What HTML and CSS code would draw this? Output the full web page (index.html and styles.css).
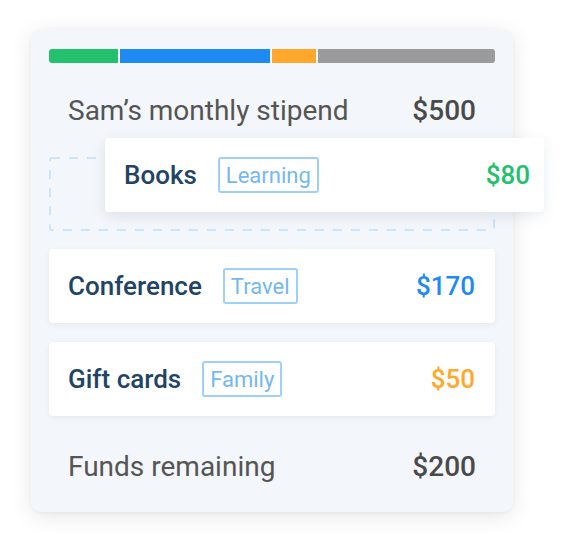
FILE: index.html
```html
<!DOCTYPE html>
<html>
<head>
<meta charset="utf-8">
<link rel="stylesheet" href="styles.css">
</head>
<body>
<div class="card">
  <div class="bar">
    <span class="seg seg-green"></span>
    <span class="seg seg-blue"></span>
    <span class="seg seg-orange"></span>
    <span class="seg seg-gray"></span>
  </div>
  <div class="row summary">
    <span class="label">Sam’s monthly stipend</span>
    <span class="amount">$500</span>
  </div>
  <div class="list">
    <div class="placeholder">
      <svg class="dash" width="446" height="74" viewBox="0 0 446 74">
        <rect x="1" y="1" width="444" height="72" rx="1" fill="none" stroke="#cde5fb" stroke-width="2" stroke-dasharray="9 9"/>
      </svg>
      <div class="item dragging">
        <span class="name">Books</span>
        <span class="tag">Learning</span>
        <span class="price green">$80</span>
      </div>
    </div>
    <div class="item">
      <span class="name">Conference</span>
      <span class="tag">Travel</span>
      <span class="price blue">$170</span>
    </div>
    <div class="item">
      <span class="name">Gift cards</span>
      <span class="tag">Family</span>
      <span class="price orange">$50</span>
    </div>
  </div>
  <div class="row footer">
    <span class="label">Funds remaining</span>
    <span class="amount">$200</span>
  </div>
</div>
</body>
</html>
```
FILE: styles.css
```css
* { box-sizing: border-box; }
html, body { margin: 0; padding: 0; background: #ffffff; }
body {
  width: 564px;
  height: 552px;
  overflow: hidden;
  font-family: Roboto, "Liberation Sans", sans-serif;
  padding: 30px 0 0 31px;
}
.card {
  width: 482px;
  height: 482px;
  background: #f3f6fa;
  border-radius: 10px;
  box-shadow: 0 4px 22px rgba(0, 0, 0, 0.10), 0 1px 4px rgba(0, 0, 0, 0.04);
  padding: 19px 18px 0 18px;
}
.bar {
  display: flex;
  gap: 2px;
  height: 14px;
}
.seg { display: block; height: 14px; }
.seg-green { width: 69px; background: #23c06e; border-radius: 3px 0 0 3px; }
.seg-blue { width: 150px; background: #1f8bf2; }
.seg-orange { width: 44px; background: #ffa82b; }
.seg-gray { flex: 1; background: #9b9b9b; border-radius: 0 3px 3px 0; }
.row {
  display: flex;
  align-items: center;
  justify-content: space-between;
  padding: 0 19px 0 19px;
}
.summary { height: 94px; }
.footer { height: 98px; padding-top: 3px; }
.label {
  font-size: 28px;
  color: #555555;
  font-weight: 400;
}
.amount {
  font-size: 28px;
  color: #4a4a4a;
  font-weight: 500;
}
.list {
  display: flex;
  flex-direction: column;
  gap: 19px;
}
.placeholder {
  position: relative;
  width: 446px;
  height: 73px;
}
.dash { display: block; position: absolute; left: 0; top: 0; }
.item {
  display: flex;
  align-items: center;
  height: 74px;
  width: 446px;
  background: #ffffff;
  border-radius: 4px;
  box-shadow: 0 2px 6px rgba(30, 60, 100, 0.06);
  padding: 0 20px 0 19px;
}
.item.dragging {
  position: absolute;
  left: 56px;
  top: -19px;
  width: 439px;
  padding-right: 14px;
  box-shadow: 0 4px 14px rgba(30, 60, 100, 0.10);
}
.name {
  font-size: 26px;
  font-weight: 500;
  color: #1f4466;
}
.tag {
  margin-left: 21px;
  height: 36px;
  display: flex;
  align-items: center;
  padding: 0 6px;
  border: 2px solid #9fd0f8;
  border-radius: 3px;
  font-size: 22px;
  color: #74b8f2;
}
.price {
  margin-left: auto;
  font-size: 26px;
  font-weight: 500;
}
.green { color: #23c06e; }
.blue { color: #1f8bf2; }
.orange { color: #ffa82b; }
```
